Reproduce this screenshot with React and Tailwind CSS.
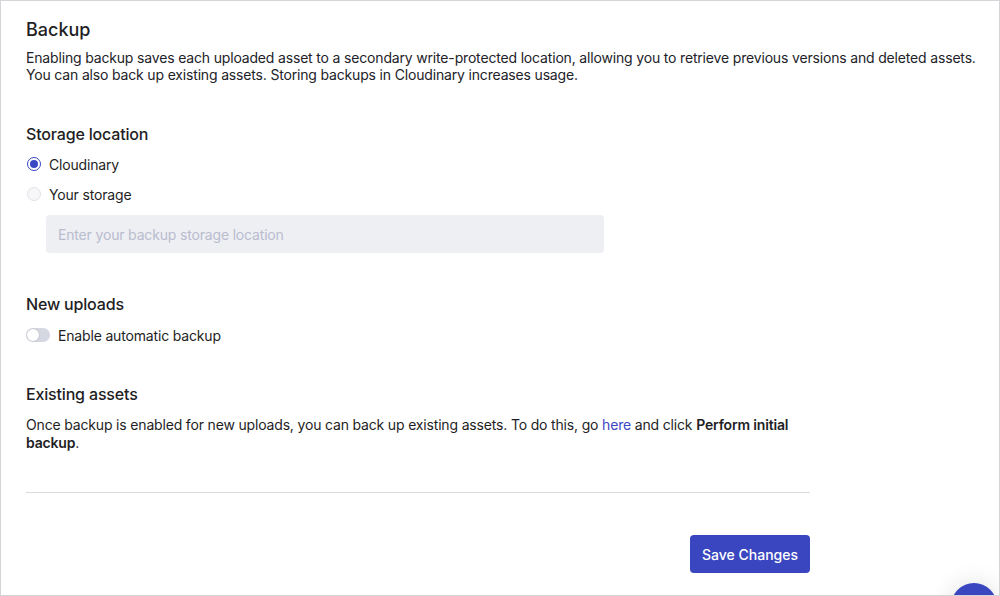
export default function App() {
  return (
    <div className="w-[1000px] h-[596px] border border-[#d4d4d8] bg-white overflow-hidden relative text-[#1e1e24] tracking-[-0.17px]" style={{ fontFamily: 'Inter, "Noto Sans", sans-serif' }}>
      <div className="pl-[25px] pr-[10px] pt-[17px]">
        <h1 className="text-[18px] leading-[24px] font-medium tracking-normal">Backup</h1>
        <p className="mt-[7px] text-[14px] leading-[17px] text-[#222228]">
          Enabling backup saves each uploaded asset to a secondary write-protected location, allowing you to retrieve previous versions and deleted assets. You can also back up existing assets. Storing backups in Cloudinary increases usage.
        </p>

        <h2 className="mt-[39px] text-[16px] leading-[24px] font-medium">Storage location</h2>
        <div className="mt-[3px] flex flex-col">
          <label className="flex items-center gap-[8px] h-[30px] pl-[1px]">
            <span className="w-[14px] h-[14px] rounded-full border border-[#3b48c4] flex items-center justify-center bg-white">
              <span className="w-[8px] h-[8px] rounded-full bg-[#3b48c4]" />
            </span>
            <span className="text-[14px]">Cloudinary</span>
          </label>
          <label className="flex items-center gap-[8px] h-[30px] pl-[1px]">
            <span className="w-[14px] h-[14px] rounded-full border border-[#e1e2e8] bg-[#f7f7f9]" />
            <span className="text-[14px]">Your storage</span>
          </label>
        </div>
        <div className="ml-[20px] mt-[6px] w-[558px] h-[38px] rounded-[4px] bg-[#eeeff3] flex items-center px-[12px] text-[14px] text-[#b9bccf]">
          Enter your backup storage location
        </div>

        <h2 className="mt-[39px] text-[16px] leading-[24px] font-medium">New uploads</h2>
        <div className="mt-[6px] flex items-center gap-[8px] h-[26px]">
          <span className="w-[24px] h-[14px] rounded-full bg-[#d5d7e2] relative">
            <span className="absolute left-[1px] top-[1px] w-[12px] h-[12px] rounded-full bg-white shadow-[0_0_2px_rgba(0,0,0,0.2)]" />
          </span>
          <span className="text-[14px]">Enable automatic backup</span>
        </div>

        <h2 className="mt-[34px] text-[16px] leading-[24px] font-medium">Existing assets</h2>
        <p className="mt-[10px] w-[784px] text-[14px] leading-[18px]">
          Once backup is enabled for new uploads, you can back up existing assets. To do this, go <span className="text-[#3b48c4]">here</span> and click <b className="font-semibold">Perform initial backup</b>.
        </p>
        <div className="mt-[40px] w-[784px] border-t border-[#d9d9e0]" />
        <div className="w-[784px] flex justify-end mt-[42px]">
          <button className="h-[38px] px-[12px] rounded-[4px] bg-[#3a46c0] text-white text-[14px] font-medium tracking-normal">Save Changes</button>
        </div>
      </div>
      <div className="absolute left-[950px] top-[582px] w-[46px] h-[46px] rounded-full bg-[#3a46c0] shadow-[0_0_24px_rgba(0,0,0,0.12)]" />
    </div>
  );
}
